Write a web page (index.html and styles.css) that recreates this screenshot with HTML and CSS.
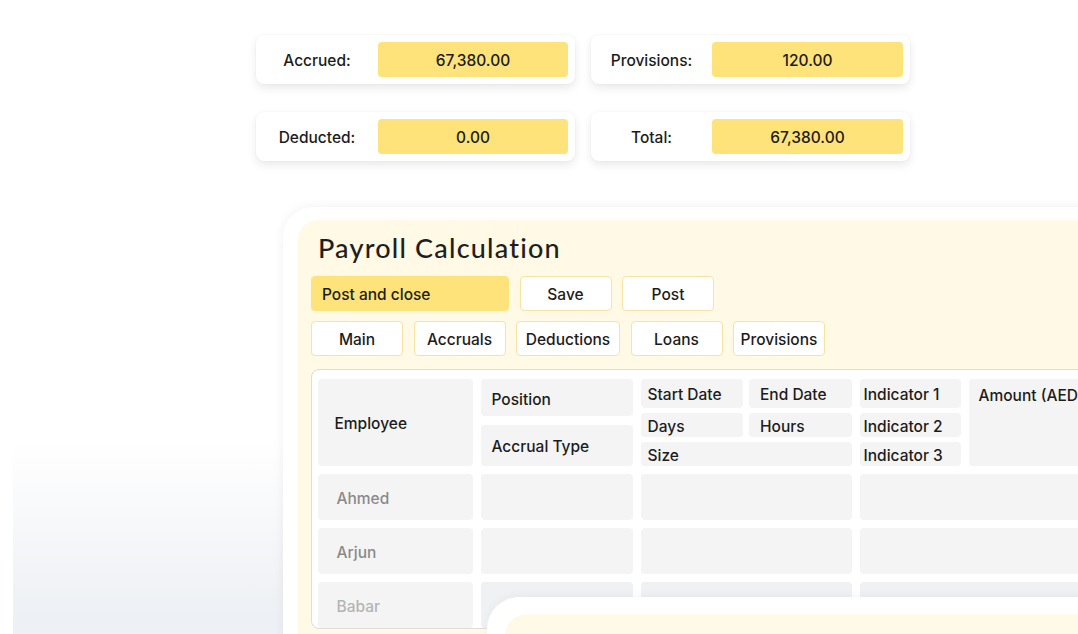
FILE: index.html
```html
<!DOCTYPE html>
<html lang="en">
<head>
<meta charset="utf-8">
<title>Payroll Calculation</title>
<link rel="stylesheet" href="styles.css">
</head>
<body>
<div class="bg-fade"></div>

<section class="summary">
  <div class="stat"><span class="stat-label">Accrued:</span><span class="stat-value">67,380.00</span></div>
  <div class="stat stat-right"><span class="stat-label">Provisions:</span><span class="stat-value">120.00</span></div>
  <div class="stat"><span class="stat-label">Deducted:</span><span class="stat-value">0.00</span></div>
  <div class="stat stat-right"><span class="stat-label">Total:</span><span class="stat-value">67,380.00</span></div>
</section>

<section class="frame">
  <div class="panel">
    <h1 class="title">Payroll Calculation</h1>
    <div class="btn-row">
      <button class="btn btn-primary">Post and close</button>
      <button class="btn">Save</button>
      <button class="btn">Post</button>
    </div>
    <div class="btn-row">
      <button class="btn">Main</button>
      <button class="btn">Accruals</button>
      <button class="btn btn-wide">Deductions</button>
      <button class="btn">Loans</button>
      <button class="btn">Provisions</button>
    </div>

    <div class="table">
      <div class="cell h-emp">Employee</div>
      <div class="stack stack-pos">
        <div class="cell h-pos">Position</div>
        <div class="cell h-acc">Accrual Type</div>
      </div>
      <div class="dates">
        <div class="cell d-l">Start Date</div>
        <div class="cell d-r">End Date</div>
        <div class="cell d-l">Days</div>
        <div class="cell d-r">Hours</div>
        <div class="cell d-l d-size">Size</div>
      </div>
      <div class="stack stack-ind">
        <div class="cell i-1">Indicator 1</div>
        <div class="cell i-2">Indicator 2</div>
        <div class="cell i-3">Indicator 3</div>
      </div>
      <div class="cell h-amt">Amount (AED)</div>

      <div class="cell r-name">Ahmed</div>
      <div class="cell"></div>
      <div class="cell span-2"></div>
      <div class="cell span-2"></div>

      <div class="cell r-name">Arjun</div>
      <div class="cell"></div>
      <div class="cell span-2"></div>
      <div class="cell span-2"></div>

      <div class="cell r-name r-fade">Babar</div>
      <div class="cell r-fadecell"></div>
      <div class="cell span-2 r-fadecell"></div>
      <div class="cell span-2 r-fadecell"></div>
    </div>
  </div>
</section>

<div class="overlay-card"><div class="overlay-inner"></div></div>
</body>
</html>
```

FILE: styles.css
```css
html {
  margin: 0;
  padding: 0;
  width: 1078px;
  height: 634px;
  overflow: hidden;
  background: #ffffff;
}

body {
  margin: 0;
  padding: 0;
  width: 1078px;
  height: 634px;
  overflow: hidden;
  position: relative;
  font-family: "Inter", "Noto Sans", "Liberation Sans", sans-serif;
  font-weight: 500;
  font-size: 15.5px;
  color: #1c1c1c;
}

.bg-fade {
  position: absolute;
  left: 13px;
  top: 440px;
  width: 290px;
  height: 194px;
  background: linear-gradient(to bottom, rgba(238, 241, 245, 0), #edf0f4 92%);
  z-index: -1;
}

/* summary cards */
.summary {
  display: grid;
  grid-template-columns: 319px 319px;
  column-gap: 16px;
  row-gap: 28px;
  padding: 35px 0 0 256px;
}

.stat {
  display: flex;
  align-items: center;
  height: 49px;
  padding-right: 7px;
  background: #fff;
  border-radius: 8px;
  box-shadow: 0 4px 10px rgba(0, 0, 0, 0.09), 0 0 2px rgba(0, 0, 0, 0.05);
}

.stat-label {
  width: 122px;
  padding-top: 2px;
  text-align: center;
  flex: none;
}

.stat-right .stat-label {
  width: 121px;
}

.stat-value {
  flex: 1;
  height: 35px;
  box-sizing: border-box;
  padding-top: 2px;
  display: flex;
  align-items: center;
  justify-content: center;
  background: #fee27a;
  border-radius: 4px;
}

/* frame */
.frame {
  margin: 46px 0 0 283px;
  width: 860px;
  height: 460px;
  box-sizing: border-box;
  padding: 13px 0 0 15px;
  background: #ffffff;
  border-radius: 30px;
  box-shadow: 0 0 12px rgba(0, 0, 0, 0.06);
}

.panel {
  height: 100%;
  box-sizing: border-box;
  padding: 12px 0 0 13px;
  background: #fff9e5;
  border-radius: 20px;
}

.title {
  margin: 0 0 12px 7px;
  font-family: "Lato", "Inter", sans-serif;
  font-weight: 500;
  font-size: 27px;
  line-height: 32px;
  letter-spacing: 1.2px;
  color: #1e1e1e;
}

.btn-row {
  display: flex;
  gap: 10.5px;
  margin-bottom: 10px;
}

.btn {
  width: 92px;
  height: 35px;
  padding: 2px 0 0;
  box-sizing: border-box;
  border: 1.5px solid #f8e3a3;
  border-radius: 4px;
  background: #ffffff;
  font-family: inherit;
  font-weight: 500;
  font-size: 15.5px;
  color: #1c1c1c;
}

.btn-wide {
  width: 104px;
}

.btn-primary {
  width: 198px;
  text-align: left;
  padding-left: 10px;
  background: #fee27a;
  border-color: #fee27a;
}

/* table */
.table {
  margin-top: 13px;
  width: 820px;
  box-sizing: border-box;
  padding: 8.5px 0 0 5.5px;
  border: 1.5px solid #dddddd;
  border-radius: 8px;
  background: #ffffff;
  display: grid;
  grid-template-columns: 155px 152px 102px 101px 101px 160px;
  grid-template-rows: 87px 46px 46px 46px;
  column-gap: 8px;
  row-gap: 8px;
}

.cell {
  background: #f4f4f4;
  border-radius: 4px;
  display: flex;
  align-items: center;
  box-sizing: border-box;
  padding-top: 3px;
  white-space: nowrap;
}

.h-emp {
  padding-left: 17px;
}

.stack {
  display: flex;
  flex-direction: column;
}

.stack-pos {
  gap: 9px;
}

.h-pos {
  height: 37px;
  padding-left: 11px;
  padding-top: 5px;
}

.h-acc {
  flex: 1;
  padding-left: 11px;
}

.dates {
  grid-column: span 2;
  display: grid;
  grid-template-columns: 1fr 1fr;
  grid-template-rows: 29px 24px 24px;
  column-gap: 6px;
  row-gap: 5px;
}

.d-l {
  padding-left: 7px;
}

.d-r {
  padding-left: 11px;
}

.d-size {
  grid-column: span 2;
}

.stack-ind {
  gap: 5px;
}

.i-1 {
  height: 29px;
  padding-left: 4px;
}

.i-2,
.i-3 {
  height: 24px;
  padding-left: 4px;
}

.h-amt {
  align-items: flex-start;
  padding: 7px 0 0 10px;
  line-height: 20px;
}

.span-2 {
  grid-column: span 2;
}

.r-name {
  padding-left: 19px;
  color: #8a8a8a;
}

.r-fade {
  color: #b4b4b4;
}

.r-fadecell {
  background: #f0f1f3;
}

/* overlapping card at bottom */
.overlay-card {
  position: absolute;
  left: 487px;
  top: 597px;
  width: 700px;
  height: 120px;
  box-sizing: border-box;
  padding: 17px 0 0 18px;
  background: #ffffff;
  border-radius: 32px;
  box-shadow: 0 -2px 10px rgba(0, 0, 0, 0.04);
}

.overlay-inner {
  height: 100%;
  background: #fffae7;
  border-radius: 22px;
}
```
